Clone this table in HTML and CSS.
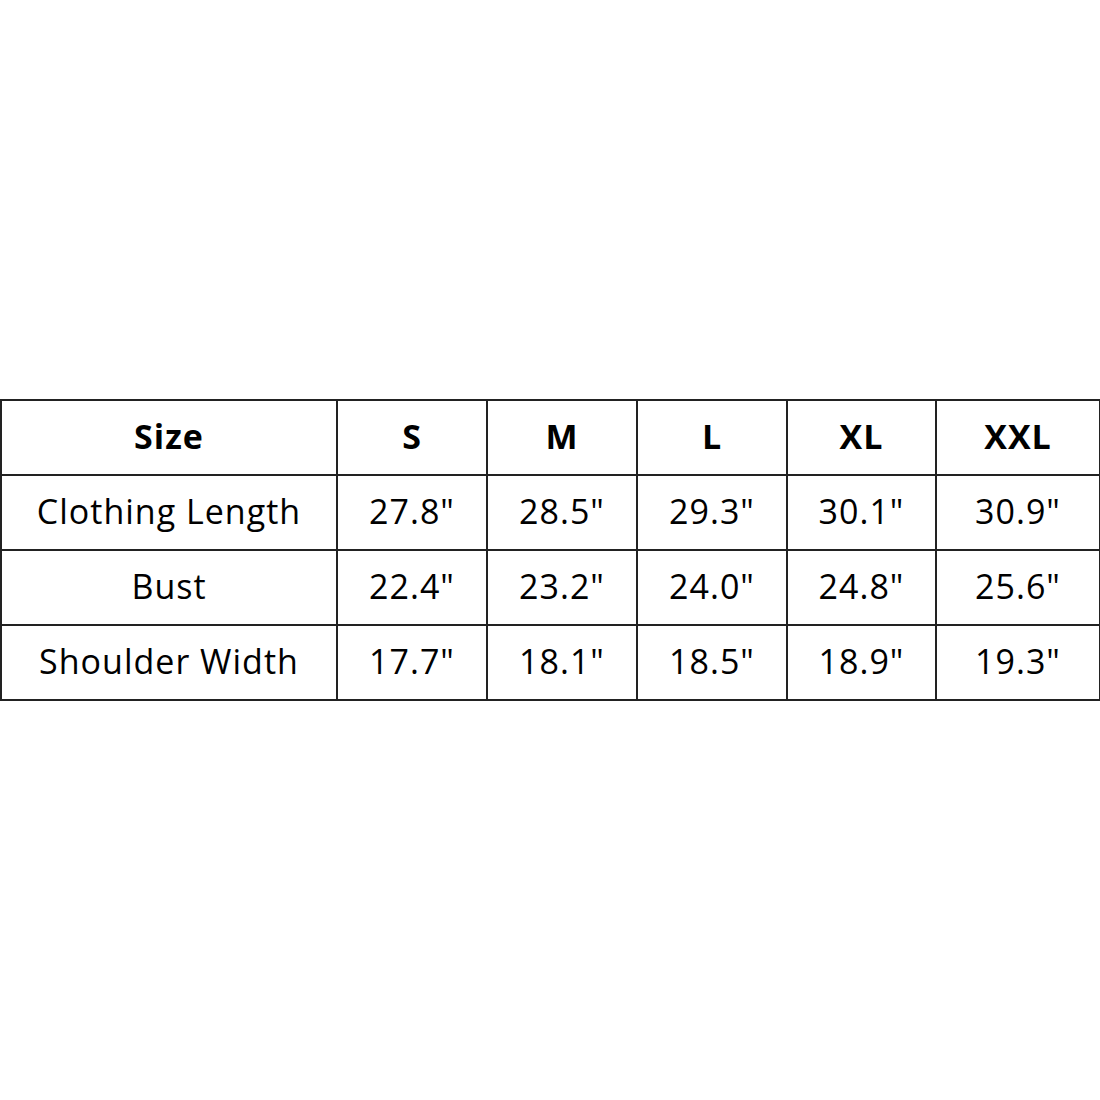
FILE: index.html
```html
<!DOCTYPE html>
<html>
<head>
<meta charset="utf-8">
<link rel="stylesheet" href="styles.css">
</head>
<body>
<div class="page">
  <table class="sizes">
    <colgroup>
      <col class="c-label"><col class="c-s"><col class="c-s"><col class="c-s"><col class="c-xl"><col class="c-xxl">
    </colgroup>
    <tr class="head"><th>Size</th><th>S</th><th>M</th><th>L</th><th>XL</th><th>XXL</th></tr>
    <tr><td>Clothing Length</td><td>27.8"</td><td>28.5"</td><td>29.3"</td><td>30.1"</td><td>30.9"</td></tr>
    <tr><td>Bust</td><td>22.4"</td><td>23.2"</td><td>24.0"</td><td>24.8"</td><td>25.6"</td></tr>
    <tr><td>Shoulder Width</td><td>17.7"</td><td>18.1"</td><td>18.5"</td><td>18.9"</td><td>19.3"</td></tr>
  </table>
</div>
</body>
</html>
```
FILE: styles.css
```css
html, body { margin: 0; padding: 0; background: #fff; }
.page {
  width: 1100px;
  height: 1100px;
  display: flex;
  align-items: center;
  justify-content: flex-start;
}
.sizes {
  border-collapse: collapse;
  table-layout: fixed;
  width: 1099px;
  font-family: "Open Sans", "Noto Sans", sans-serif;
  color: #000;
}
.c-label { width: 336px; }
.c-s { width: 150px; }
.c-xl { width: 149px; }
.c-xxl { width: 164px; }
.sizes th, .sizes td {
  border: 2px solid #222;
  height: 70px;
  padding: 0 0 3px 0;
  text-align: center;
  vertical-align: middle;
  font-size: 34px;
  font-weight: 400;
  letter-spacing: 1px;
  line-height: 1;
}
.sizes th { font-weight: 700; }
```
